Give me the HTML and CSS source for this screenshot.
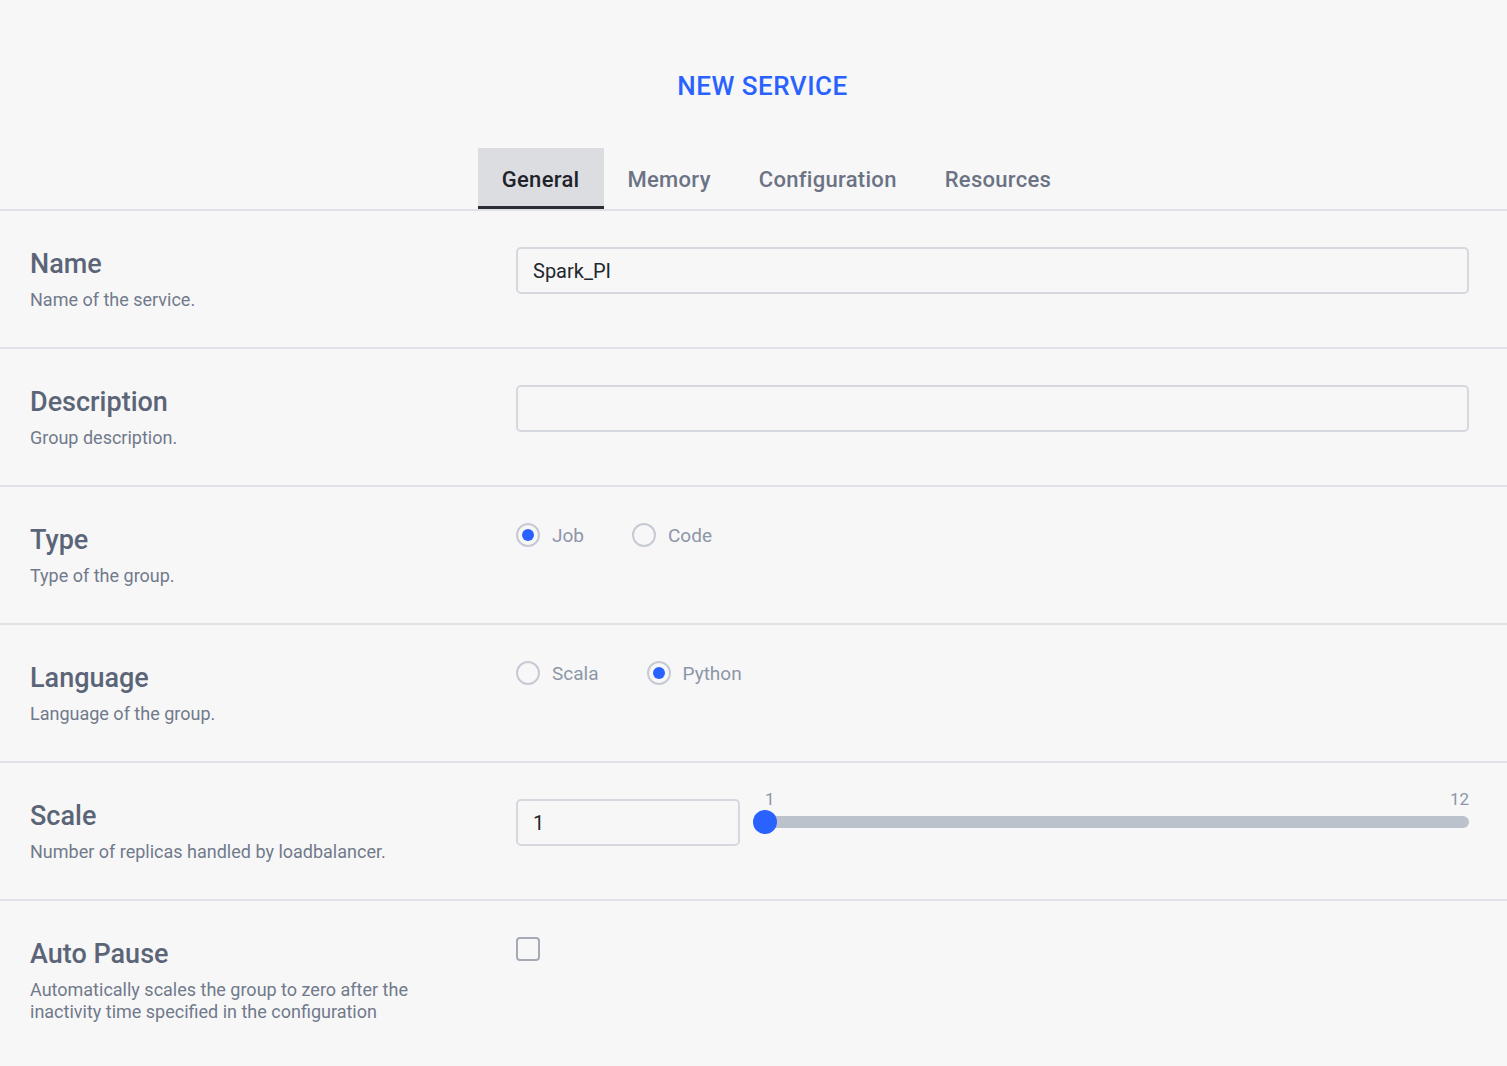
FILE: index.html
```html
<!DOCTYPE html>
<html lang="en">

<head>
    <meta charset="UTF-8">
    <meta name="viewport" content="width=device-width, initial-scale=1.0">
    <title>New Service</title>
    <link rel="stylesheet" href="styles.css">
</head>

<body>
    <div class="page">
        <h1 class="page__title">NEW SERVICE</h1>

        <nav class="tabs">
            <a class="tabs__item tabs__item--active">General</a>
            <a class="tabs__item">Memory</a>
            <a class="tabs__item">Configuration</a>
            <a class="tabs__item">Resources</a>
        </nav>

        <form class="form">
            <div class="field">
                <div class="field__info">
                    <label class="field__label" for="name">Name</label>
                    <p class="field__help">Name of the service.</p>
                </div>
                <div class="field__control">
                    <input class="text-input" type="text" id="name" value="Spark_PI">
                </div>
            </div>

            <div class="field">
                <div class="field__info">
                    <label class="field__label" for="description">Description</label>
                    <p class="field__help">Group description.</p>
                </div>
                <div class="field__control">
                    <input class="text-input" type="text" id="description">
                </div>
            </div>

            <div class="field">
                <div class="field__info">
                    <span class="field__label">Type</span>
                    <p class="field__help">Type of the group.</p>
                </div>
                <div class="field__control radios">
                    <label class="radio"><span class="radio__dot radio__dot--on"></span>Job</label>
                    <label class="radio"><span class="radio__dot"></span>Code</label>
                </div>
            </div>

            <div class="field">
                <div class="field__info">
                    <span class="field__label">Language</span>
                    <p class="field__help">Language of the group.</p>
                </div>
                <div class="field__control radios">
                    <label class="radio"><span class="radio__dot"></span>Scala</label>
                    <label class="radio"><span class="radio__dot radio__dot--on"></span>Python</label>
                </div>
            </div>

            <div class="field">
                <div class="field__info">
                    <label class="field__label" for="scale">Scale</label>
                    <p class="field__help">Number of replicas handled by loadbalancer.</p>
                </div>
                <div class="field__control scale">
                    <input class="text-input text-input--small" type="text" id="scale" value="1">
                    <div class="slider">
                        <div class="slider__labels">
                            <span>1</span>
                            <span>12</span>
                        </div>
                        <div class="slider__track">
                            <span class="slider__thumb"></span>
                        </div>
                    </div>
                </div>
            </div>

            <div class="field field--last">
                <div class="field__info">
                    <span class="field__label">Auto Pause</span>
                    <p class="field__help">Automatically scales the group to zero after the inactivity time specified in the configuration</p>
                </div>
                <div class="field__control">
                    <span class="checkbox"></span>
                </div>
            </div>
        </form>
    </div>
</body>

</html>
```

FILE: styles.css
```css
:root {
    --bg-color: #f7f7f8;
    --line-color: #e0e1e6;
    --blue: #2962ff;
    --label-color: #5b6577;
    --help-color: #717a8b;
    --muted: #8d96a7;
}

body {
    background-color: var(--bg-color);
    font-family: Roboto, 'Noto Sans', sans-serif;
    margin: 0;
}

.page__title {
    color: var(--blue);
    font-size: 26px;
    font-weight: 500;
    letter-spacing: 0.5px;
    line-height: 32px;
    margin: 70px 0 0;
    padding-left: 18px;
    text-align: center;
}

.tabs {
    border-bottom: 2px solid var(--line-color);
    display: flex;
    justify-content: center;
    margin-top: 46px;
    padding-left: 46px;
}

.tabs__item {
    border-bottom: 3px solid transparent;
    color: #6b7384;
    cursor: pointer;
    font-size: 22px;
    font-weight: 500;
    letter-spacing: 0.3px;
    line-height: 53px;
    padding: 5px 24px 0;
}

.tabs__item--active {
    background-color: #dcdde1;
    border-bottom-color: #2a2d33;
    color: #1f2329;
}

.field {
    border-bottom: 2px solid var(--line-color);
    display: grid;
    gap: 66px;
    grid-template-columns: 420px 1fr;
    height: 136px;
    padding: 0 38px 0 30px;
}

.field--last {
    border-bottom: 0;
}

.field__info {
    padding-top: 37px;
}

.field__label {
    color: var(--label-color);
    display: block;
    font-size: 27px;
    font-weight: 500;
    line-height: 32px;
}

.field__help {
    color: var(--help-color);
    font-size: 18px;
    line-height: 22px;
    margin: 9px 0 0;
}

.field__control {
    padding-top: 36px;
}

.text-input {
    background: transparent;
    border: 2px solid #d5d8df;
    border-radius: 5px;
    box-sizing: border-box;
    color: #23262c;
    font-family: inherit;
    font-size: 20px;
    height: 47px;
    padding: 0 15px;
    width: 100%;
}

.text-input--small {
    flex: 0 0 224px;
    width: 224px;
}

.radios {
    display: flex;
    gap: 48px;
}

.radio {
    align-items: center;
    color: var(--muted);
    display: flex;
    font-size: 19px;
    gap: 12px;
    height: 24px;
}

.radio__dot {
    border: 2px solid #c6cad2;
    border-radius: 50%;
    box-sizing: border-box;
    display: block;
    height: 24px;
    position: relative;
    width: 24px;
}

.radio__dot--on::after {
    background-color: var(--blue);
    border-radius: 50%;
    content: '';
    height: 12px;
    left: 4px;
    position: absolute;
    top: 4px;
    width: 12px;
}

.scale {
    align-items: flex-start;
    display: flex;
}

.slider {
    flex: 1;
    margin: -9px 0 0 13px;
}

.slider__labels {
    color: var(--muted);
    display: flex;
    font-size: 17px;
    justify-content: space-between;
    line-height: 18px;
    padding-left: 12px;
}

.slider__track {
    background-color: #bcc2cb;
    border-radius: 6px;
    height: 12px;
    margin: 8px 0 0 12px;
    position: relative;
}

.slider__thumb {
    background-color: var(--blue);
    border-radius: 50%;
    height: 24px;
    left: -12px;
    position: absolute;
    top: -6px;
    width: 24px;
}

.checkbox {
    border: 2px solid #a4abb7;
    border-radius: 4px;
    box-sizing: border-box;
    display: block;
    height: 24px;
    width: 24px;
}
```
